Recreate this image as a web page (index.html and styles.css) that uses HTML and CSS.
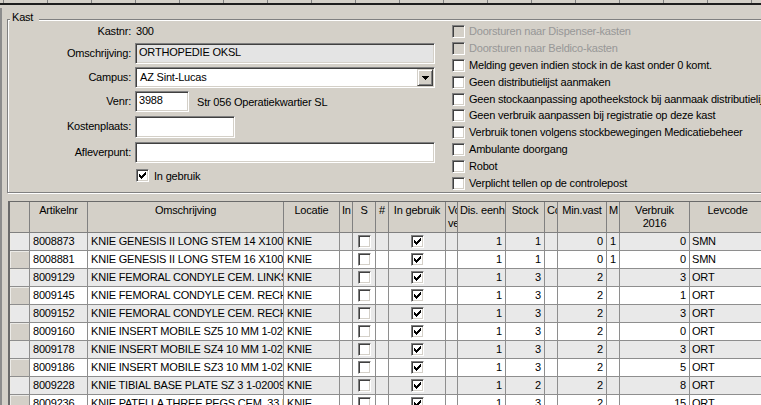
FILE: index.html
```html
<!DOCTYPE html>
<html>
<head>
<meta charset="utf-8">
<link rel="stylesheet" href="styles.css">
</head>
<body>
<div class="topbar"></div>
<div class="main">
  <div class="group">
    <div class="gtitle">Kast</div>
    <div class="cols">
      <div class="form">
        <div class="lbl lbl-top">Kastnr:</div>
        <div class="val-text">300</div>

        <div class="lbl">Omschrijving:</div>
        <div><div class="inp inp-ro w300">ORTHOPEDIE OKSL</div></div>

        <div class="lbl">Campus:</div>
        <div>
          <div class="sel w300">
            <span class="sel-text">AZ Sint-Lucas</span>
            <span class="ddbtn"><svg width="7" height="4" viewBox="0 0 7 4" shape-rendering="crispEdges"><path d="M0 0h7v1h-1v1h-1v1h-1v1h-1v-1h-1v-1h-1v-1h-1z" fill="#000"/></svg></span>
          </div>
        </div>

        <div class="lbl">Venr:</div>
        <div class="venr">
          <div class="inp w54">3988</div>
          <span class="venr-desc">Str 056 Operatiekwartier SL</span>
        </div>

        <div class="lbl">Kostenplaats:</div>
        <div><div class="inp w100 h22"></div></div>

        <div class="lbl">Afleverpunt:</div>
        <div><div class="inp w300"></div></div>

        <div></div>
        <div class="inuse">
          <span class="cb"><svg width="11" height="11" viewBox="0 0 11 11" shape-rendering="crispEdges"><polygon points="2,4 3,4 3,5 4,5 4,6 5,6 5,5 6,5 6,4 7,4 7,3 8,3 8,2 9,2 9,5 8,5 8,6 7,6 7,7 6,7 6,8 5,8 5,9 4,9 4,8 3,8 3,7 2,7" fill="#000"/></svg></span>
          <span>In gebruik</span>
        </div>
      </div>

      <div class="checks">
        <div class="chk dis"><span class="cb cb-dis"></span><span>Doorsturen naar Dispenser-kasten</span></div>
        <div class="chk dis"><span class="cb cb-dis"></span><span>Doorsturen naar Beldico-kasten</span></div>
        <div class="chk"><span class="cb"></span><span>Melding geven indien stock in de kast onder 0 komt.</span></div>
        <div class="chk"><span class="cb"></span><span>Geen distributielijst aanmaken</span></div>
        <div class="chk"><span class="cb"></span><span>Geen stockaanpassing apotheekstock bij aanmaak distributielijst</span></div>
        <div class="chk"><span class="cb"></span><span>Geen verbruik aanpassen bij registratie op deze kast</span></div>
        <div class="chk"><span class="cb"></span><span>Verbruik tonen volgens stockbewegingen Medicatiebeheer</span></div>
        <div class="chk"><span class="cb"></span><span>Ambulante doorgang</span></div>
        <div class="chk"><span class="cb"></span><span>Robot</span></div>
        <div class="chk"><span class="cb"></span><span>Verplicht tellen op de controlepost</span></div>
      </div>
    </div>
  </div>

  <div class="grid">
    <div class="gr hdr">
      <div></div>
      <div>Artikelnr</div>
      <div>Omschrijving</div>
      <div>Locatie</div>
      <div class="hl">In</div>
      <div>S</div>
      <div>#</div>
      <div>In gebruik</div>
      <div class="hl">Vo<br>ve</div>
      <div class="hl">Dis. eenheid</div>
      <div>Stock</div>
      <div class="hl">Co</div>
      <div>Min.vast</div>
      <div class="hl">M</div>
      <div>Verbruik<br>2016</div>
      <div>Levcode</div>
      <div></div>
    </div>

    <div class="gr row alt">
      <div class="rh"></div><div>8008873</div><div>KNIE GENESIS II LONG STEM 14 X100 MM</div><div>KNIE</div><div></div>
      <div class="cc"><span class="cb"></span></div><div></div>
      <div class="cc"><span class="cb"><svg width="11" height="11" viewBox="0 0 11 11" shape-rendering="crispEdges"><polygon points="2,4 3,4 3,5 4,5 4,6 5,6 5,5 6,5 6,4 7,4 7,3 8,3 8,2 9,2 9,5 8,5 8,6 7,6 7,7 6,7 6,8 5,8 5,9 4,9 4,8 3,8 3,7 2,7" fill="#000"/></svg></span></div>
      <div></div><div class="num">1</div><div class="num">1</div><div></div><div class="num">0</div><div>1</div><div class="num">0</div><div class="lev">SMN</div><div></div>
    </div>
    <div class="gr row">
      <div class="rh"></div><div>8008881</div><div>KNIE GENESIS II LONG STEM 16 X100 MM</div><div>KNIE</div><div></div>
      <div class="cc"><span class="cb"></span></div><div></div>
      <div class="cc"><span class="cb"><svg width="11" height="11" viewBox="0 0 11 11" shape-rendering="crispEdges"><polygon points="2,4 3,4 3,5 4,5 4,6 5,6 5,5 6,5 6,4 7,4 7,3 8,3 8,2 9,2 9,5 8,5 8,6 7,6 7,7 6,7 6,8 5,8 5,9 4,9 4,8 3,8 3,7 2,7" fill="#000"/></svg></span></div>
      <div></div><div class="num">1</div><div class="num">1</div><div></div><div class="num">0</div><div>1</div><div class="num">0</div><div class="lev">SMN</div><div></div>
    </div>
    <div class="gr row alt">
      <div class="rh"></div><div>8009129</div><div>KNIE FEMORAL CONDYLE CEM. LINKS</div><div>KNIE</div><div></div>
      <div class="cc"><span class="cb"></span></div><div></div>
      <div class="cc"><span class="cb"><svg width="11" height="11" viewBox="0 0 11 11" shape-rendering="crispEdges"><polygon points="2,4 3,4 3,5 4,5 4,6 5,6 5,5 6,5 6,4 7,4 7,3 8,3 8,2 9,2 9,5 8,5 8,6 7,6 7,7 6,7 6,8 5,8 5,9 4,9 4,8 3,8 3,7 2,7" fill="#000"/></svg></span></div>
      <div></div><div class="num">1</div><div class="num">3</div><div></div><div class="num">2</div><div></div><div class="num">3</div><div class="lev">ORT</div><div></div>
    </div>
    <div class="gr row">
      <div class="rh"></div><div>8009145</div><div>KNIE FEMORAL CONDYLE CEM. RECHTS</div><div>KNIE</div><div></div>
      <div class="cc"><span class="cb"></span></div><div></div>
      <div class="cc"><span class="cb"><svg width="11" height="11" viewBox="0 0 11 11" shape-rendering="crispEdges"><polygon points="2,4 3,4 3,5 4,5 4,6 5,6 5,5 6,5 6,4 7,4 7,3 8,3 8,2 9,2 9,5 8,5 8,6 7,6 7,7 6,7 6,8 5,8 5,9 4,9 4,8 3,8 3,7 2,7" fill="#000"/></svg></span></div>
      <div></div><div class="num">1</div><div class="num">3</div><div></div><div class="num">2</div><div></div><div class="num">1</div><div class="lev">ORT</div><div></div>
    </div>
    <div class="gr row alt">
      <div class="rh"></div><div>8009152</div><div>KNIE FEMORAL CONDYLE CEM. RECHTS</div><div>KNIE</div><div></div>
      <div class="cc"><span class="cb"></span></div><div></div>
      <div class="cc"><span class="cb"><svg width="11" height="11" viewBox="0 0 11 11" shape-rendering="crispEdges"><polygon points="2,4 3,4 3,5 4,5 4,6 5,6 5,5 6,5 6,4 7,4 7,3 8,3 8,2 9,2 9,5 8,5 8,6 7,6 7,7 6,7 6,8 5,8 5,9 4,9 4,8 3,8 3,7 2,7" fill="#000"/></svg></span></div>
      <div></div><div class="num">1</div><div class="num">3</div><div></div><div class="num">2</div><div></div><div class="num">3</div><div class="lev">ORT</div><div></div>
    </div>
    <div class="gr row">
      <div class="rh"></div><div>8009160</div><div>KNIE INSERT MOBILE SZ5 10 MM 1-0200</div><div>KNIE</div><div></div>
      <div class="cc"><span class="cb"></span></div><div></div>
      <div class="cc"><span class="cb"><svg width="11" height="11" viewBox="0 0 11 11" shape-rendering="crispEdges"><polygon points="2,4 3,4 3,5 4,5 4,6 5,6 5,5 6,5 6,4 7,4 7,3 8,3 8,2 9,2 9,5 8,5 8,6 7,6 7,7 6,7 6,8 5,8 5,9 4,9 4,8 3,8 3,7 2,7" fill="#000"/></svg></span></div>
      <div></div><div class="num">1</div><div class="num">3</div><div></div><div class="num">2</div><div></div><div class="num">0</div><div class="lev">ORT</div><div></div>
    </div>
    <div class="gr row alt">
      <div class="rh"></div><div>8009178</div><div>KNIE INSERT MOBILE SZ4 10 MM 1-0200</div><div>KNIE</div><div></div>
      <div class="cc"><span class="cb"></span></div><div></div>
      <div class="cc"><span class="cb"><svg width="11" height="11" viewBox="0 0 11 11" shape-rendering="crispEdges"><polygon points="2,4 3,4 3,5 4,5 4,6 5,6 5,5 6,5 6,4 7,4 7,3 8,3 8,2 9,2 9,5 8,5 8,6 7,6 7,7 6,7 6,8 5,8 5,9 4,9 4,8 3,8 3,7 2,7" fill="#000"/></svg></span></div>
      <div></div><div class="num">1</div><div class="num">3</div><div></div><div class="num">2</div><div></div><div class="num">3</div><div class="lev">ORT</div><div></div>
    </div>
    <div class="gr row">
      <div class="rh"></div><div>8009186</div><div>KNIE INSERT MOBILE SZ3 10 MM 1-0200</div><div>KNIE</div><div></div>
      <div class="cc"><span class="cb"></span></div><div></div>
      <div class="cc"><span class="cb"><svg width="11" height="11" viewBox="0 0 11 11" shape-rendering="crispEdges"><polygon points="2,4 3,4 3,5 4,5 4,6 5,6 5,5 6,5 6,4 7,4 7,3 8,3 8,2 9,2 9,5 8,5 8,6 7,6 7,7 6,7 6,8 5,8 5,9 4,9 4,8 3,8 3,7 2,7" fill="#000"/></svg></span></div>
      <div></div><div class="num">1</div><div class="num">3</div><div></div><div class="num">2</div><div></div><div class="num">5</div><div class="lev">ORT</div><div></div>
    </div>
    <div class="gr row alt">
      <div class="rh"></div><div>8009228</div><div>KNIE TIBIAL BASE PLATE SZ 3 1-02009</div><div>KNIE</div><div></div>
      <div class="cc"><span class="cb"></span></div><div></div>
      <div class="cc"><span class="cb"><svg width="11" height="11" viewBox="0 0 11 11" shape-rendering="crispEdges"><polygon points="2,4 3,4 3,5 4,5 4,6 5,6 5,5 6,5 6,4 7,4 7,3 8,3 8,2 9,2 9,5 8,5 8,6 7,6 7,7 6,7 6,8 5,8 5,9 4,9 4,8 3,8 3,7 2,7" fill="#000"/></svg></span></div>
      <div></div><div class="num">1</div><div class="num">2</div><div></div><div class="num">2</div><div></div><div class="num">8</div><div class="lev">ORT</div><div></div>
    </div>
    <div class="gr row">
      <div class="rh"></div><div>8009236</div><div>KNIE PATELLA THREE PEGS CEM. 33 MM</div><div>KNIE</div><div></div>
      <div class="cc"><span class="cb"></span></div><div></div>
      <div class="cc"><span class="cb"><svg width="11" height="11" viewBox="0 0 11 11" shape-rendering="crispEdges"><polygon points="2,4 3,4 3,5 4,5 4,6 5,6 5,5 6,5 6,4 7,4 7,3 8,3 8,2 9,2 9,5 8,5 8,6 7,6 7,7 6,7 6,8 5,8 5,9 4,9 4,8 3,8 3,7 2,7" fill="#000"/></svg></span></div>
      <div></div><div class="num">1</div><div class="num">3</div><div></div><div class="num">2</div><div></div><div class="num">15</div><div class="lev">ORT</div><div></div>
    </div>
  </div>
</div>
</body>
</html>
```

FILE: styles.css
```css
html, body {
  margin: 0;
  padding: 0;
}
body {
  width: 761px;
  height: 405px;
  overflow: hidden;
  background: #d4d0c8;
  font-family: "Liberation Sans", Arial, sans-serif;
  font-size: 11px;
  letter-spacing: -0.2px;
  color: #000;
}
.topbar {
  height: 3px;
  background-color: #d4d0c8;
  background-image: linear-gradient(90deg, #808080 0 1px, transparent 1px);
  background-size: 44px 3px;
  background-position: 47px 0;
  border-bottom: 2px solid #1e1e1e;
  margin-bottom: 3px;
}
.main {
  border-left: 2px solid #8c8c8c;
  padding: 11px 0 0 5px;
  height: 400px;
  overflow: hidden;
}
.group {
  width: 820px;
  height: 172px;
  border: 1px solid #808080;
  box-shadow: inset 1px 1px 0 #fff, 1px 1px 0 #fff;
}
.gtitle {
  width: max-content;
  margin: -9px 0 0 2px;
  padding: 0 6px 0 2px;
  background: #d4d0c8;
  line-height: 13px;
  height: 13px;
}
.cols {
  display: flex;
  align-items: flex-start;
}
.form {
  display: grid;
  grid-template-columns: 123px 300px;
  grid-template-rows: 19px 24px 24px 25px 26px 26px 16px;
  column-gap: 4px;
  width: 427px;
  flex: none;
}
.lbl {
  text-align: right;
  line-height: 21px;
  white-space: nowrap;
}
.lbl-top {
  line-height: 15px;
}
.val-text {
  line-height: 15px;
  padding-left: 1px;
}
.inp {
  box-sizing: border-box;
  height: 21px;
  border: 1px solid;
  border-color: #808080 #fff #fff #808080;
  box-shadow: inset 1px 1px 0 #404040, inset -1px -1px 0 #d4d0c8;
  background: #fff;
  padding: 2px 3px;
  line-height: 13px;
  white-space: nowrap;
  overflow: hidden;
}
.inp-ro {
  background: #e4e4e4;
}
.w300 { width: 300px; }
.w54 { width: 54px; }
.w100 { width: 100px; }
.h22 { height: 22px; }
.sel {
  box-sizing: border-box;
  height: 21px;
  border: 1px solid;
  border-color: #808080 #fff #fff #808080;
  box-shadow: inset 1px 1px 0 #404040, inset -1px -1px 0 #d4d0c8;
  background: #fff;
  display: flex;
  align-items: stretch;
  justify-content: space-between;
  padding: 1px;
}
.sel-text {
  padding: 2px 0 0 3px;
  line-height: 13px;
}
.ddbtn {
  box-sizing: border-box;
  width: 16px;
  background: #d4d0c8;
  border: 1px solid;
  border-color: #d4d0c8 #404040 #404040 #d4d0c8;
  box-shadow: inset 1px 1px 0 #fff, inset -1px -1px 0 #808080;
  display: flex;
  align-items: center;
  justify-content: center;
}
.ddbtn svg {
  display: block;
  margin-top: 1px;
}
.venr {
  display: flex;
  align-items: center;
  height: 21px;
}
.venr-desc {
  margin-left: 8px;
  white-space: nowrap;
}
.inuse {
  display: flex;
  align-items: center;
  gap: 5px;
  height: 13px;
  padding-left: 1px;
  margin-top: 1px;
}
.cb {
  display: block;
  flex: none;
  box-sizing: border-box;
  width: 13px;
  height: 13px;
  border: 1px solid;
  border-color: #808080 #fff #fff #808080;
  box-shadow: inset 1px 1px 0 #404040, inset -1px -1px 0 #d4d0c8;
  background: #fff;
}
.cb svg {
  display: block;
}
.cb-dis {
  background: #d4d0c8;
}
.checks {
  margin: -1px 0 0 17px;
}
.chk {
  display: flex;
  align-items: center;
  gap: 4px;
  height: 16.9px;
  white-space: nowrap;
  line-height: 13px;
}
.chk.dis {
  color: #979797;
}
.grid {
  margin: 8px 0 0 1px;
  width: 900px;
  border-left: 2px solid #6a6a6a;
  border-top: 1px solid #6a6a6a;
}
.gr {
  display: grid;
  grid-template-columns: 20px 58px 196px 56px 13px 23px 13px 57px 12px 48px 39px 13px 49px 13px 70px 76px 1fr;
}
.gr > div {
  box-sizing: border-box;
  border-right: 1px solid #8e8e8e;
  border-bottom: 1px solid #8e8e8e;
  overflow: hidden;
  white-space: nowrap;
}
.hdr > div {
  height: 31px;
  background: #d4d0c8;
  text-align: center;
  padding-top: 2px;
  line-height: 13px;
  border-color: #808080;
}
.hdr > .hl {
  text-align: left;
  padding-left: 2px;
}
.row > div {
  height: 18px;
  line-height: 17px;
  padding: 0 3px;
  background: #fff;
}
.row.alt > div {
  background: #e9e9e9;
}
.row > .rh {
  background: #d4d0c8;
  box-shadow: inset 1px 1px 0 #ecebe7;
}
.row > .num {
  text-align: right;
}
.row > .lev {
  padding-left: 2px;
}
.row > .cc {
  display: flex;
  justify-content: center;
  align-items: center;
  padding: 0;
}
```
